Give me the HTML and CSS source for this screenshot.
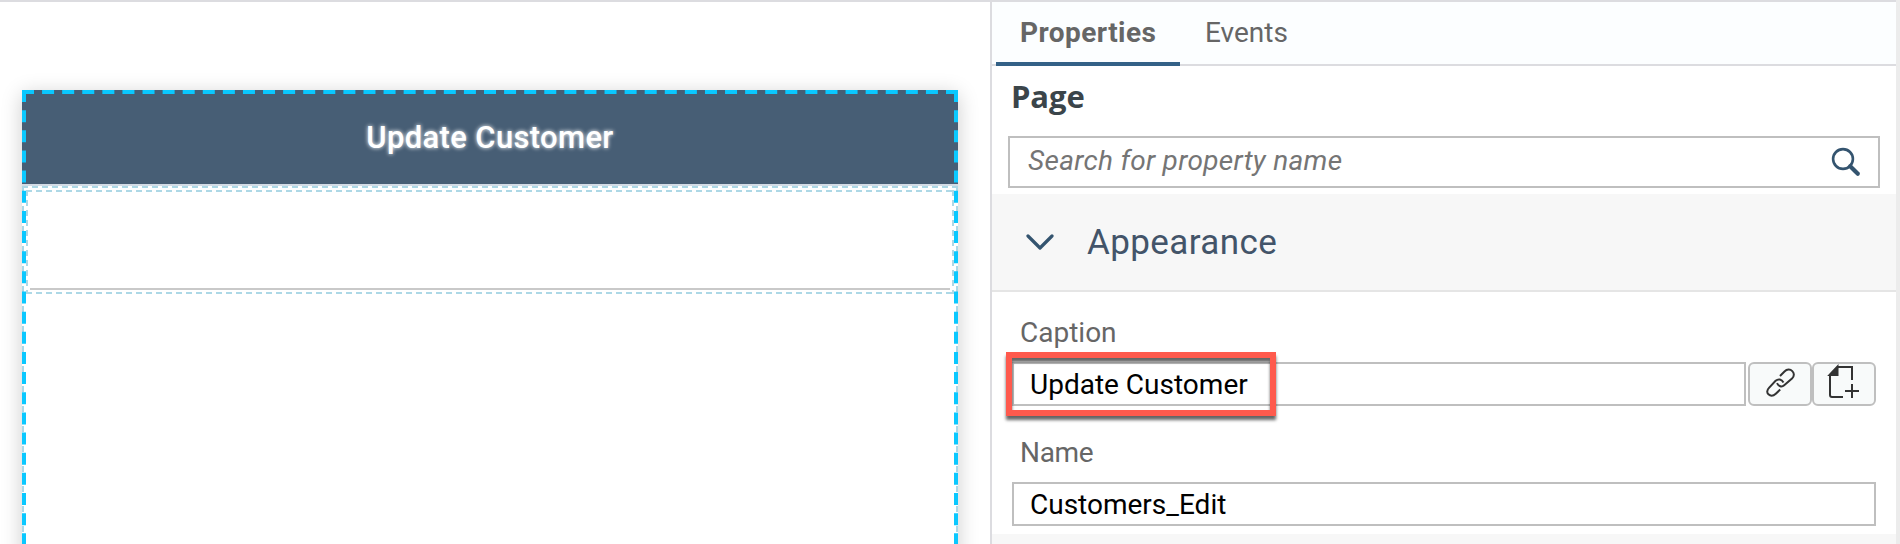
FILE: index.html
```html
<!DOCTYPE html>
<html lang="en">
<head>
<meta charset="utf-8">
<title>Page editor</title>
<link rel="stylesheet" href="styles.css">
</head>
<body>
<div class="editor">
  <main class="canvas">
    <section class="page">
      <header class="page-header"><span class="page-title">Update Customer</span></header>
      <div class="page-body">
        <div class="section"></div>
        <svg class="dashes" width="936" height="358">
          <path d="M0 1H936M1 0V358M935 0V358" />
          <path d="M4 5H932M4 107H932M5 4V108M931 4V108" />
        </svg>
      </div>
      <svg class="selection" width="936" height="454">
        <path stroke-dasharray="12 8.087" d="M0 2H936" />
        <path stroke-dasharray="12 8.15" d="M2 0V454M934 0V454" />
      </svg>
    </section>
  </main>
  <aside class="panel">
    <nav class="tabs">
      <div class="tab tab-active">Properties</div>
      <div class="tab">Events</div>
    </nav>
    <h1 class="heading">Page</h1>
    <div class="search">
      <span class="placeholder">Search for property name</span>
      <svg width="30" height="30" viewBox="0 0 30 30" fill="none" stroke="#34546f">
        <circle cx="12" cy="12" r="9.9" stroke-width="2.6"/>
        <path d="M19.2 19.2L26.8 26.8" stroke-width="4.2" stroke-linecap="round"/>
      </svg>
    </div>
    <div class="group">
      <svg width="28" height="18" viewBox="0 0 28 18" fill="none" stroke="#34546f" stroke-width="3.2" stroke-linecap="round" stroke-linejoin="round"><path d="M2 2L14 14L26 2"/></svg>
      <span class="group-title">Appearance</span>
    </div>
    <div class="fields">
      <label class="label">Caption</label>
      <div class="row">
        <div class="input">Update Customer</div>
        <div class="buttons">
          <div class="button">
            <svg width="60" height="40" viewBox="0 0 60 40" fill="none" stroke="#333" stroke-width="2">
              <path d="M30 12L34.5 7.5C37 5 40.2 5 42.3 7.1C44.4 9.2 44.4 12.2 42 14.6L34.2 21.2C31.8 23.4 28.5 22.4 27 19.2"/>
              <path d="M33.5 18.4C31.6 15.2 28.3 14.4 25.6 16.8L19.2 23.6C16.8 26.1 16.7 28.7 18.4 30.3C20.4 32.2 23.4 32 25.8 29.7L30.2 25.6"/>
            </svg>
          </div>
          <div class="button">
            <svg width="60" height="40" viewBox="0 0 60 40" fill="none" stroke="#333" stroke-width="2">
              <path d="M38 16V3H24L16 11V31Q16 33 18 33H29"/>
              <path d="M23.5 2.5V11H15.5Z" fill="#333"/>
              <path d="M38 20V34M31 27H45"/>
            </svg>
          </div>
        </div>
        <div class="callout"></div>
      </div>
      <label class="label label-name">Name</label>
      <div class="input input-name">Customers_Edit</div>
    </div>
    <div class="next-group"></div>
  </aside>
  <div class="gutter"></div>
</div>
</body>
</html>
```
FILE: styles.css
```css
* { box-sizing: border-box; }
body {
  margin: 0;
  height: 544px;
  overflow: hidden;
  background: #fff;
  font-family: Roboto, "Liberation Sans", sans-serif;
  font-size: 28px;
  line-height: 34px;
  white-space: nowrap;
}
svg { display: block; flex: none; }
.editor { display: flex; height: 544px; }

.canvas {
  width: 990px;
  padding: 88px 32px 0 22px;
  border-top: 2px solid #dcdce0;
  overflow: hidden;
}
.page {
  position: relative;
  width: 936px;
  height: 470px;
  background: #fff;
  box-shadow: 0 4px 20px rgba(0, 0, 0, .2);
}
.page-header {
  display: flex;
  justify-content: center;
  height: 96px;
  padding-top: 30px;
  background: #475e75;
  border-bottom: 2px solid #d3dce6;
}
.page-title {
  color: #fff;
  font-size: 31px;
  font-weight: 500;
  line-height: 36px;
  letter-spacing: .35px;
  text-shadow: 0 0 4px #fff;
}
.page-body { position: relative; padding: 102px 8px 0; }
.section { height: 2px; background: #c9c9c9; }
.dashes { position: absolute; left: 0; top: 0; fill: none; stroke: #add8e6; stroke-width: 2; stroke-dasharray: 6 4; }
.selection { position: absolute; left: 0; top: 0; fill: none; stroke: #0ac8ff; stroke-width: 4; }

.panel {
  display: flex;
  flex-direction: column;
  width: 906px;
  border-left: 2px solid #dcdce0;
  border-top: 2px solid #dcdce0;
}
.tabs {
  display: flex;
  height: 64px;
  padding-left: 4px;
  background: #fcfeff;
  border-bottom: 2px solid #dcdce0;
  color: #666;
}
.tab { height: 64px; padding: 14px 25px 0; }
.tab-active { width: 184px; padding-left: 24px; border-bottom: 4px solid #346187; font-weight: 700; letter-spacing: .45px; }
.heading {
  height: 44px;
  margin: 10px 0 16px 19px;
  font: 700 31px/40px "Open Sans", sans-serif;
  color: #3b454a;
  letter-spacing: -.1px;
}
.search {
  display: flex;
  justify-content: space-between;
  height: 52px;
  margin: 0 16px;
  padding: 6px 17px 0 18px;
  border: 2px solid #bfbfbf;
  color: #757575;
  font-style: italic;
  letter-spacing: .3px;
}
.search svg { margin-top: 3px; }
.group {
  display: flex;
  height: 98px;
  margin-top: 6px;
  padding: 40px 0 0 34px;
  gap: 33px;
  background: #f7f7f7;
  border-bottom: 2px solid #e5e5e5;
}
.group-title { margin-top: -12px; font-size: 35px; line-height: 42px; letter-spacing: .4px; color: #435469; }
.fields { height: 242px; padding: 23px 20px 0; color: #000; }
.label { display: flex; height: 47px; padding: 1px 0 0 8px; color: #666; }
.row { position: relative; display: flex; gap: 2px; height: 44px; }
.input { display: flex; width: 734px; height: 44px; padding: 4px 16px 0; border: 2px solid #bfbfbf; background: #fff; }
.input-name { width: 864px; }
.label-name { height: 76px; padding-top: 30px; letter-spacing: -.3px; }
.buttons { display: flex; }
.button { width: 64px; height: 44px; border: 2px solid #bfbfbf; border-radius: 6px; background: #f8fafa; }
.callout {
  position: absolute;
  left: -6px;
  top: -10px;
  width: 270px;
  height: 64px;
  border: 6px solid #ff5a4d;
  box-shadow: 0 4px 3px rgba(0, 0, 0, .6), inset 0 4px 3px rgba(0, 0, 0, .6);
}
.next-group { flex: 1; background: #f7f7f7; }
.gutter { width: 4px; background: #ececec; }
```
